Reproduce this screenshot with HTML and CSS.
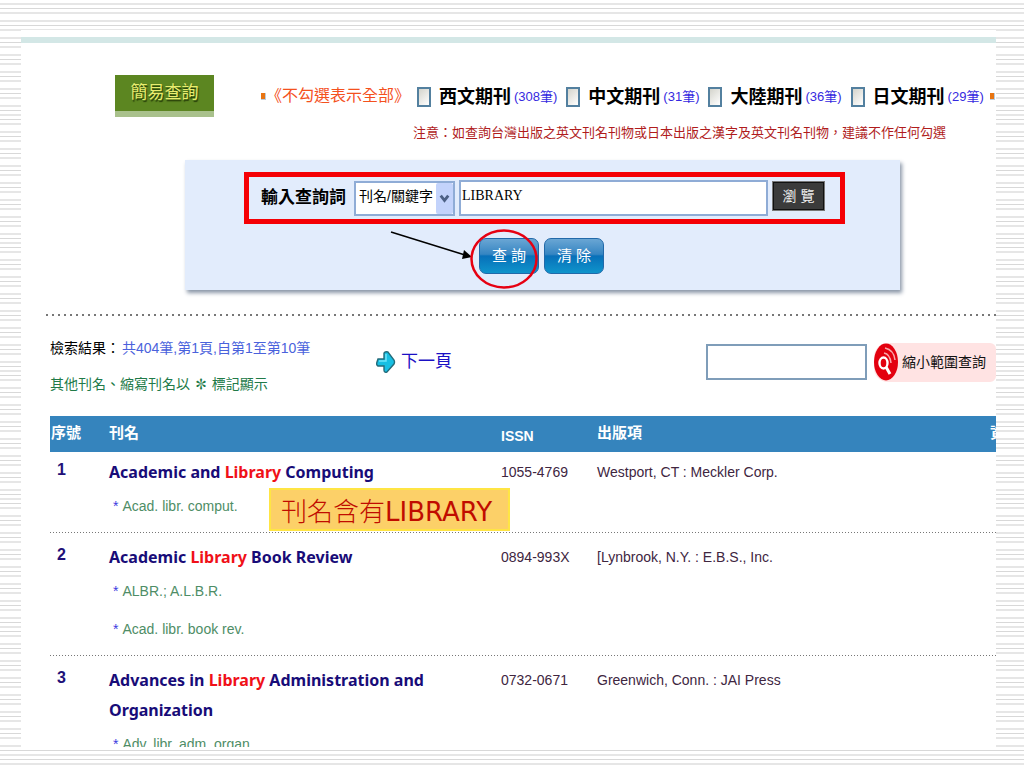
FILE: index.html
```html
<!DOCTYPE html>
<html lang="zh-Hant">
<head>
<meta charset="utf-8">
<meta name="viewport" content="width=device-width, initial-scale=1">
<title>簡易查詢</title>
<link rel="stylesheet" href="styles.css">
</head>
<body>
<main class="slide">
  <div class="band"></div>
  <form class="search" onsubmit="return false">
    <header class="filters">
      <h1 class="badge">簡易查詢</h1>
      <span class="bullet"></span>
      <span class="hint">《不勾選表示全部》</span>
      <div class="options">
        <label class="option"><input type="checkbox"><b>西文期刊</b><span>(308筆)</span></label>
        <label class="option"><input type="checkbox"><b>中文期刊</b><span>(31筆)</span></label>
        <label class="option"><input type="checkbox"><b>大陸期刊</b><span>(36筆)</span></label>
        <label class="option"><input type="checkbox"><b>日文期刊</b><span>(29筆)</span></label>
      </div>
      <span class="bullet bullet-end"></span>
    </header>
    <p class="notice">注意：如查詢台灣出版之英文刊名刊物或日本出版之漢字及英文刊名刊物，建議不作任何勾選</p>
    <section class="panel">
      <div class="query">
        <label class="query-label" for="term">輸入查詢詞</label>
        <div class="select-wrap">
          <select class="field-select" aria-label="查詢欄位"><option>刊名/關鍵字</option></select>
          <svg class="chevron" viewBox="0 0 18 32" preserveAspectRatio="none"><rect width="18" height="32" rx="2" fill="#c3d3fb"/><path d="M5 13l4 5 4-5" fill="none" stroke="#4d6185" stroke-width="3"/></svg>
        </div>
        <input class="term" id="term" type="text" value="LIBRARY">
        <button class="browse" type="button">瀏 覽</button>
      </div>
      <div class="actions">
        <button class="action" type="submit">查 詢</button>
        <button class="action" type="reset">清 除</button>
      </div>
      <svg class="pointer" width="158" height="62" viewBox="0 0 158 62">
        <path d="M3 4L77 27" stroke="#000" stroke-width="1.5"/>
        <path d="M84 29L74 31L76 22Z"/>
        <ellipse cx="116" cy="31" rx="32.5" ry="28.5" fill="none" stroke="#e60012" stroke-width="2.5"/>
      </svg>
    </section>
  </form>
  <section class="results">
    <div class="summary">
      <div class="counts">
        <p>檢索結果：<span class="count">共404筆,第1頁,自第1至第10筆</span></p>
        <p class="legend">其他刊名、縮寫刊名以 <b>✽</b> 標記顯示</p>
      </div>
      <a class="next" href="#next"><svg width="20" height="24" viewBox="0 0 20 24"><path d="M2 9H8V3Q9 1 12 2L18 10Q19 12 18 14L11 22Q8 23 8 20V16H2Q0 15 1 12Z" fill="#17bfe3" stroke="#236b7a" stroke-width="1.4"/><path d="M3 11H10V4" fill="none" stroke="#6ee5fa" stroke-width="1.5"/></svg>下一頁</a>
      <div class="narrow">
        <input class="narrow-input" type="text" aria-label="縮小範圍查詢">
        <button class="narrow-button" type="button"><svg width="24" height="38" viewBox="0 0 24 38"><ellipse cx="12" cy="19" rx="12" ry="18.5" fill="#e3000f"/><ellipse cx="9.5" cy="20" rx="4" ry="5.5" fill="none" stroke="#fff" stroke-width="2.4"/><path d="M12 24L16 31" stroke="#fff" stroke-width="3"/><path d="M10 10Q16 11 17 20M11 5Q20 7 21 17" fill="none" stroke="#f9a7aa" stroke-width="1.5"/></svg>縮小範圍查詢</button>
      </div>
    </div>
    <table class="journals">
      <colgroup><col class="c-no"><col class="c-title"><col class="c-issn"><col><col class="c-more"></colgroup>
      <thead><tr><th>序號</th><th>刊名</th><th class="latin">ISSN</th><th>出版項</th><th>資</th></tr></thead>
      <tbody>
        <tr><td class="no">1</td><td><a class="title" href="#j1">Academic and <em>Library</em> Computing</a><p class="alias"><i>*</i>Acad. libr. comput.</p></td><td>1055-4769</td><td>Westport, CT : Meckler Corp.</td><td></td></tr>
        <tr><td class="no">2</td><td><a class="title" href="#j2">Academic <em>Library</em> Book Review</a><p class="alias"><i>*</i>ALBR.; A.L.B.R.</p><p class="alias"><i>*</i>Acad. libr. book rev.</p></td><td>0894-993X</td><td>[Lynbrook, N.Y. : E.B.S., Inc.</td><td></td></tr>
        <tr><td class="no">3</td><td><a class="title" href="#j3">Advances in <em>Library</em> Administration and Organization</a><p class="alias"><i>*</i>Adv. libr. adm. organ.</p></td><td>0732-0671</td><td>Greenwich, Conn. : JAI Press</td><td></td></tr>
      </tbody>
    </table>
    <div class="callout">刊名含有<span>LIBRARY</span></div>
  </section>
</main>
</body>
</html>
```
FILE: styles.css
```css
* { box-sizing: border-box; }
body {
  margin: 0;
  height: 100vh;
  padding: 30px 28px 21px 21px;
  overflow: hidden;
  font-family: "Liberation Sans", "Noto Sans CJK TC", sans-serif;
  font-size: 14px;
  line-height: 20px;
  color: #111;
  background: repeating-linear-gradient(#d8d8d8 0 1px, #fff 1px 4px, #e6e6e6 4px 6px, #fff 6px 12px, #e6e6e6 12px 14px, #fff 14px 17px) 0 -9px / 100% 128px;
}
h1, p { margin: 0; }
button, input, select { font: inherit; margin: 0; }
.slide {
  height: 100%;
  overflow: hidden;
  background: #fff;
}
.band { height: 6px; margin-top: 7px; background: #d3e7e6; }

.filters { display: flex; align-items: center; padding-left: 94px; margin-top: 32px; white-space: nowrap; }
.badge {
  width: 99px;
  height: 42px;
  flex: none;
  background: #5c8621;
  border-bottom: 6px solid #a9c18c;
  color: #e9ec70;
  font-size: 17px;
  font-weight: 400;
  line-height: 36px;
  text-align: center;
  text-shadow: 1px 2px 1px #263c08;
}
.bullet { width: 5px; height: 7px; flex: none; margin-left: 47px; background: #e87512; border-right: 1px solid #bcd; border-bottom: 1px solid #bcd; }
.bullet-end { margin-left: 6px; }
.hint { color: #f4511e; font-size: 16px; width: 144px; }
.options { display: flex; flex: none; gap: 9px; margin-left: 7px; padding-top: 2px; }
.option { display: flex; align-items: center; }
.option input { appearance: none; width: 14px; height: 20px; margin-right: 8px; border: 2px solid #53809f; background: linear-gradient(135deg, #d4d4cc, #fff); }
.option b { font-size: 18px; color: #000; margin-right: 3px; }
.option span { color: #3529e0; font-size: 13px; }
.notice { margin: 6px 0 0 392px; color: #b01c1c; font-size: 13px; white-space: nowrap; }

.panel {
  position: relative;
  margin: 17px 96px 0 164px;
  padding: 12px 55px 16px 59px;
  background: #e2ecfc;
  box-shadow: 2px 3px 4px #8b97a8;
}
.query { display: flex; align-items: center; gap: 4px; height: 52px; padding: 0 15px 0 12px; border: 5px solid #f50005; }
.query-label { font-size: 17px; font-weight: 700; color: #000; white-space: nowrap; margin-right: 4px; }
.select-wrap { position: relative; width: 101px; flex: none; }
.field-select { appearance: none; display: block; width: 100%; height: 35px; padding: 0 0 4px 3px; border: 2px solid #8facd6; border-radius: 0; background: #fff; color: #000; }
.chevron { position: absolute; right: 2px; top: 2px; width: 17px; height: 31px; pointer-events: none; }
.term { flex: 1; min-width: 0; height: 36px; padding: 0 1px 5px; border: 2px solid #8facd6; background: #fff; font: 14px "Liberation Serif", serif; }
.browse { width: 53px; height: 30px; flex: none; align-self: flex-start; margin-top: 4px; padding: 0; border: 2px solid #111; outline: 1px solid #777; outline-offset: -1px; background: #3b3b3b; color: #eee; line-height: 20px; }
.actions { display: flex; justify-content: center; gap: 5px; padding: 14px 6px 0 0; }
.action { width: 60px; height: 36px; padding: 0; border: 1px solid #2169a9; border-radius: 7px; background: linear-gradient(#6aa6d4, #3585c2 45%, #0870b9 50%, #0f94cb); color: #fff; font-size: 15px; }
.pointer { position: absolute; left: 203px; top: 68px; }

.results { position: relative; padding-left: 29px; margin-top: 24px; }
.results::before { content: ""; display: block; height: 2px; margin-left: -4px; background: repeating-linear-gradient(90deg, #777 0 2px, #fff 2px 6px); }
.summary { display: flex; align-items: center; height: 100px; padding-bottom: 8px; white-space: nowrap; }
.counts { width: 326px; flex: none; padding-top: 8px; }
.counts p { height: 36px; line-height: 36px; color: #000; }
.counts .count { color: #4a62dc; margin-left: 2px; }
.counts .legend { color: #217a48; }
.next { display: flex; align-items: center; gap: 5px; font-size: 17px; color: #1a10c4; text-decoration: none; }
.narrow { display: flex; align-items: center; gap: 7px; margin-left: auto; }
.narrow-input { width: 161px; height: 36px; border: 2px solid #7f9db9; background: #fff; }
.narrow-button { display: flex; align-items: center; gap: 4px; height: 39px; width: 122px; padding: 0; border: 0; border-radius: 14px 6px 6px 14px; background: #ffe3e3; color: #111; }

.journals { width: 100%; table-layout: fixed; border-collapse: collapse; color: #40263f; }
.c-no { width: 59px; }
.c-title { width: 392px; }
.c-issn { width: 96px; }
.c-more { width: 6px; }
.journals th { height: 36px; padding: 0 0 2px; background: #3584bd; color: #fff; font-size: 15px; text-align: left; white-space: nowrap; }
.journals th:first-child { padding-left: 1px; }
.journals th.latin { padding-top: 5px; font-size: 14px; }
.journals td { padding: 9px 0 8px; vertical-align: top; font-size: 14px; line-height: 30px; }
.journals tbody tr { background: repeating-linear-gradient(90deg, #777 0 1px, #fff 1px 3px) 0 100% / 100% 1px no-repeat; }
.journals .no { padding: 7px 0 0 7px; color: #211078; font-size: 16px; font-weight: 700; }
.journals tbody tr:first-child td { padding-top: 5px; }
.journals tbody tr:first-child .no { padding-top: 3px; }
.title { display: block; width: 330px; color: #180c78; font: 700 16px/30px "Noto Sans", "Liberation Sans", sans-serif; text-decoration: none; }
.title em { color: #f01018; font-style: normal; }
.alias { padding: 4px 0 4px 4px; color: #4e8d66; }
.alias i { color: #3b3be0; font-style: normal; margin-right: 4px; }
.callout {
  position: absolute;
  left: 248px;
  top: 174px;
  height: 43px;
  padding: 0 16px 0 10px;
  border: 2px solid #ffe544;
  background: #fcd068;
  color: #c00c00;
  font-family: "Noto Sans CJK TC", sans-serif;
  font-size: 26px;
  font-weight: 300;
  line-height: 39px;
  white-space: nowrap;
}
.callout span { font-family: "DejaVu Sans", sans-serif; font-weight: 400; }
```
